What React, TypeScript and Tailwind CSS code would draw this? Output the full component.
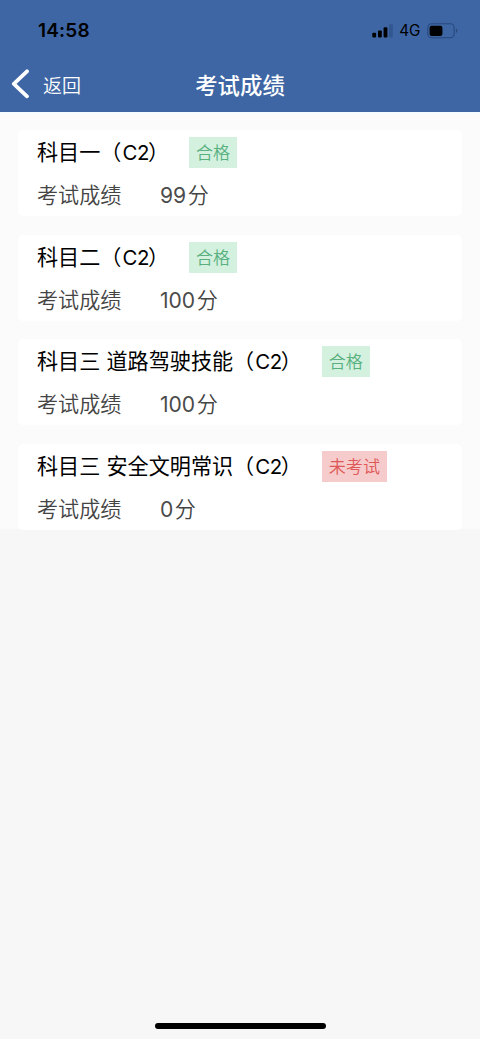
type Result = {
  subject: string;
  score: number;
  status: string;
  passed: boolean;
};

const results: Result[] = [
  { subject: '科目一', score: 99, status: '合格', passed: true },
  { subject: '科目二', score: 100, status: '合格', passed: true },
  { subject: '科目三 道路驾驶技能', score: 100, status: '合格', passed: true },
  { subject: '科目三 安全文明常识', score: 0, status: '未考试', passed: false },
];

function StatusBar() {
  return (
    <div className="flex h-[60px] items-center justify-between pt-[2px] pr-[21.5px] pl-[38px] text-black">
      <span className="text-[19px] leading-[22px] font-semibold tracking-[0.2px]">14:58</span>
      <div className="flex items-center">
        <svg width="22" height="14" viewBox="0 0 22 14">
          <rect x="0.3" y="8.8" width="3.8" height="4.8" rx="1" />
          <rect x="6" y="6.4" width="3.8" height="7.2" rx="1" />
          <rect x="11.6" y="3.2" width="3.8" height="10.4" rx="1" />
          <rect x="17" y="0.2" width="3.8" height="13.4" rx="1" fill="#32568f" />
        </svg>
        <span className="ml-[5.5px] text-[15.3px] leading-[18px]">4G</span>
        <svg className="ml-[6px]" width="32" height="16" viewBox="0 0 32 16">
          <rect x="0.8" y="0.8" width="26.4" height="14" rx="4" fill="none" stroke="#29487c" strokeWidth="1.1" />
          <rect x="2.6" y="2.7" width="12.8" height="10.2" rx="2" />
          <path d="M29 5.6c1.8.8 1.8 3.6 0 4.4Z" fill="#29487c" />
        </svg>
      </div>
    </div>
  );
}

function NavBar() {
  return (
    <nav className="grid h-[52px] grid-cols-[1fr_auto_1fr] items-center text-white">
      <button className="flex items-center pl-[10px]">
        <svg className="-mt-[4px]" width="20" height="30" viewBox="0 0 20 30" fill="none" stroke="currentColor" strokeWidth="3.8" strokeLinecap="round" strokeLinejoin="round">
          <path d="M17 2.3 3.8 14.8 17 27.3" />
        </svg>
        <span className="mt-[1px] ml-[13px] text-[19px] leading-[28px] font-[350]">返回</span>
      </button>
      <h1 className="text-[22.4px] leading-[32px] font-medium">考试成绩</h1>
      <span />
    </nav>
  );
}

function ResultCard({ subject, score, status, passed }: Result) {
  return (
    <article className="h-[86.1px] shrink-0 rounded-[5px] bg-white pt-[7px] pl-[19px]">
      <div className="flex h-[31px] items-center">
        <h2 className="text-[21.1px] leading-[31px] whitespace-nowrap text-black [word-spacing:0.3px]">
          {subject}（<span className="ml-[1px] text-[20.4px] tracking-[-0.4px]">C2</span>
          <span className="-ml-[1px]">）</span>
        </h2>
        <span
          className={`ml-[19.7px] h-[31px] px-[7.2px] text-[17.1px] leading-[31px] font-[350] ${
            passed ? 'bg-[#d4f0df] text-[#58b07f]' : 'bg-[#f6cbcb] text-[#df5858]'
          }`}
        >
          {status}
        </span>
      </div>
      <div className="mt-[12px] flex h-[31px] items-center text-[21.1px] leading-[31px] font-[350] text-[#444]">
        <span>考试成绩</span>
        <span className="ml-[38.5px] font-normal text-[#4b4b4b]">{score}</span>
        <span className="ml-[1.6px]">分</span>
      </div>
    </article>
  );
}

export default function App() {
  return (
    <div className="flex h-[1039px] w-[480px] flex-col overflow-hidden bg-[#f7f7f7] font-[Inter,'Noto_Sans_CJK_SC',sans-serif]">
      <header className="h-[112px] shrink-0 bg-[#3e66a4]">
        <StatusBar />
        <NavBar />
      </header>
      <main className="flex h-[417px] shrink-0 flex-col gap-[18.7px] border-t-2 border-[#f5fcfd] bg-[#fbfbfb] px-[18px] pt-[15.8px]">
        {results.map((result) => (
          <ResultCard key={result.subject} {...result} />
        ))}
      </main>
      <div className="mx-auto mt-auto mb-[10px] h-[6px] w-[171px] rounded-full bg-black" />
    </div>
  );
}
